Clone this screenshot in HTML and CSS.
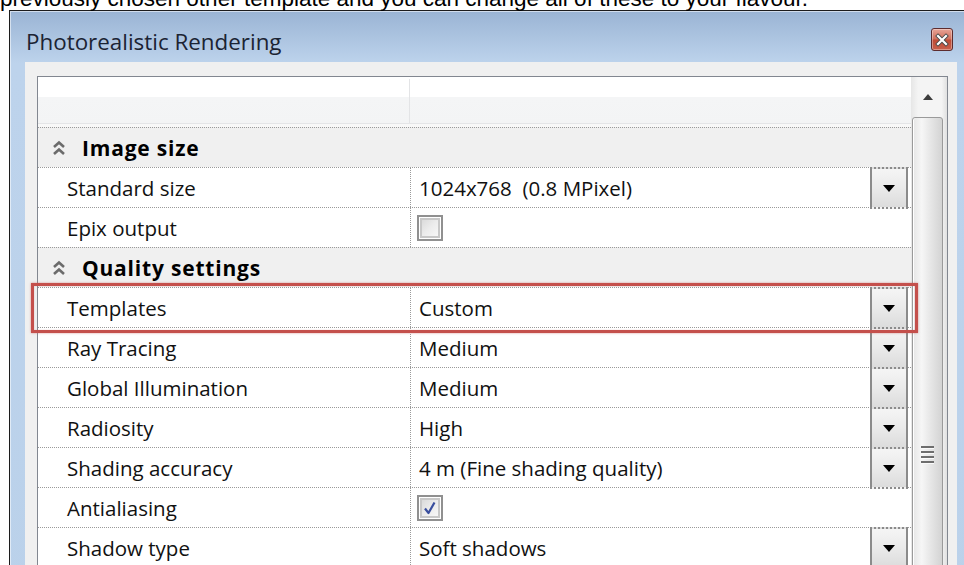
FILE: index.html
```html
<!DOCTYPE html>
<html lang="en">
<head>
<meta charset="utf-8">
<title>Photorealistic Rendering</title>
<link rel="stylesheet" href="styles.css">
</head>
<body>
<p class="caption">previously chosen other template and you can change all of these to your flavour.</p>

<div class="window">
  <div class="titlebar">
    <span class="title">Photorealistic Rendering</span>
    <span class="close">
      <svg viewBox="0 0 14 14" width="14" height="14">
        <path d="M3 3 L11 11 M11 3 L3 11" stroke="#4a4a4a" stroke-width="4" stroke-linecap="square"/>
        <path d="M3 3 L11 11 M11 3 L3 11" stroke="#fff" stroke-width="2.2" stroke-linecap="square"/>
      </svg>
    </span>
  </div>

  <div class="client">
    <div class="grid">
      <div class="rows">
        <div class="head"><div class="hname"></div><div class="hval"></div></div>

        <div class="cat">
          <svg class="chev" viewBox="0 0 14 16" width="14" height="16"><path d="M2 7 L7 2.5 L12 7 M2 14 L7 9.5 L12 14" fill="none" stroke="#6b6b6b" stroke-width="2.6"/></svg>
          <span>Image size</span>
        </div>
        <div class="row">
          <div class="name">Standard size</div>
          <div class="val"><span class="text">1024x768  (0.8 MPixel)</span><span class="dd"><i></i></span></div>
        </div>
        <div class="row">
          <div class="name">Epix output</div>
          <div class="val"><span class="check"></span></div>
        </div>

        <div class="cat">
          <svg class="chev" viewBox="0 0 14 16" width="14" height="16"><path d="M2 7 L7 2.5 L12 7 M2 14 L7 9.5 L12 14" fill="none" stroke="#6b6b6b" stroke-width="2.6"/></svg>
          <span>Quality settings</span>
        </div>
        <div class="row">
          <div class="name">Templates</div>
          <div class="val"><span class="text">Custom</span><span class="dd"><i></i></span></div>
        </div>
        <div class="row">
          <div class="name">Ray Tracing</div>
          <div class="val"><span class="text">Medium</span><span class="dd"><i></i></span></div>
        </div>
        <div class="row">
          <div class="name">Global Illumination</div>
          <div class="val"><span class="text">Medium</span><span class="dd"><i></i></span></div>
        </div>
        <div class="row">
          <div class="name">Radiosity</div>
          <div class="val"><span class="text">High</span><span class="dd"><i></i></span></div>
        </div>
        <div class="row">
          <div class="name">Shading accuracy</div>
          <div class="val"><span class="text">4 m (Fine shading quality)</span><span class="dd"><i></i></span></div>
        </div>
        <div class="row">
          <div class="name">Antialiasing</div>
          <div class="val">
            <span class="check">
              <svg viewBox="0 0 22 22" width="22" height="22"><path d="M6 11.5 L9.5 16 L15.5 5.5" fill="none" stroke="#3a4f9e" stroke-width="2.2" stroke-linejoin="round"/></svg>
            </span>
          </div>
        </div>
        <div class="row">
          <div class="name">Shadow type</div>
          <div class="val"><span class="text">Soft shadows</span><span class="dd"><i></i></span></div>
        </div>
      </div>

      <div class="vscroll">
        <div class="up"><i></i></div>
        <div class="thumb"><span class="grip"><b></b><b></b><b></b><b></b></span></div>
      </div>
    </div>
    <div class="highlight"></div>
  </div>
</div>
</body>
</html>
```

FILE: styles.css
```css
html, body {
  margin: 0;
  padding: 0;
  background: #fff;
  overflow: hidden;
  height: 565px;
}

.caption {
  margin: -11px 0 0 0;
  font: 22.5px/20px "Liberation Sans", Arial, sans-serif;
  color: #000;
  white-space: nowrap;
}

/* window frame */
.window {
  margin: 1px 0 0 9px;
  width: 955px;
  border: 1px solid #1c1c1c;
  background: linear-gradient(to bottom, #9ab4d4 0, #bdd3ec 52px, #bad1ea 100%);
  box-shadow: inset 1px 1px 0 rgba(255, 255, 255, 0.55);
  font-family: "Open Sans", "Noto Sans", sans-serif;
}

.titlebar {
  height: 51px;
  display: flex;
  align-items: center;
  padding: 0 12px 0 16px;
}

.title {
  font-size: 22.4px;
  color: #1b2333;
  margin-top: 10px;
}

.close {
  margin-left: auto;
  width: 22px;
  height: 23px;
  box-sizing: border-box;
  border: 1px solid #5d2c2e;
  border-radius: 3px;
  background: linear-gradient(to bottom, #e8a497 0, #d06f5c 48%, #bf4b36 52%, #c8604c 100%);
  box-shadow: inset 0 0 0 1px rgba(255, 255, 255, 0.35);
  display: flex;
  align-items: center;
  justify-content: center;
  margin-top: 6px;
}

/* client area */
.client {
  position: relative;
  margin-left: 15px;
  width: 932px;
  box-sizing: border-box;
  padding: 14px 9px 0 12px;
  background: #f0f0f0;
}

.grid {
  display: flex;
  border: 1px solid #828790;
  background: #fff;
  height: 600px;
}

.rows {
  width: 873px;
  flex: none;
  font-size: 20.5px;
  color: #111;
}

.head {
  display: flex;
  height: 50px;
  background: linear-gradient(to bottom, #fff 0, #fff 20px, #f4f5f6 20px, #f3f4f5 46px, #e4e5e7 46px, #e4e5e7 47px, #f8f8f8 47px);
}

.hname {
  width: 371px;
  border-right: 1px solid #e3e4e6;
  margin: 2px 0 4px;
}

.hval { flex: 1; }

.row, .cat {
  height: 40px;
  box-sizing: border-box;
  border-top: 1px dotted #9a9a9a;
  display: flex;
  align-items: center;
}

.cat {
  background: #f0f0f0;
  padding-left: 14px;
  font-weight: 700;
  font-size: 21px;
  letter-spacing: 0.8px;
  color: #000;
}

.chev {
  margin-right: 16px;
  margin-top: 1px;
}

.name {
  width: 343px;
  height: 100%;
  padding-left: 29px;
  border-right: 1px dotted #9a9a9a;
  display: flex;
  align-items: center;
}

.val {
  flex: 1;
  height: 100%;
  display: flex;
  align-items: center;
  padding: 0 3px 0 8px;
  white-space: pre;
}

.dd {
  margin-left: auto;
  align-self: flex-start;
  margin-top: -1px;
  width: 38px;
  height: 42px;
  box-sizing: border-box;
  border: 2px solid #8b8b8b;
  border-top-style: dotted;
  border-bottom-style: dotted;
  background: linear-gradient(to bottom, #f5f5f5 0, #eaeaea 50%, #dcdcdc 100%);
  display: flex;
  align-items: center;
  justify-content: center;
}

.dd i {
  width: 0;
  height: 0;
  border-left: 6px solid transparent;
  border-right: 6px solid transparent;
  border-top: 7px solid #000;
  margin-top: 1px;
}

.check {
  width: 26px;
  height: 26px;
  box-sizing: border-box;
  border: 2px solid #909090;
  background: linear-gradient(135deg, #d4d4d4 0, #ececec 50%, #fbfbfb 100%);
  box-shadow: inset 0 0 0 1px #fff, inset 0 0 0 3px #c8c8c8;
  display: flex;
  align-items: center;
  justify-content: center;
  margin-left: -2px;
}

/* vertical scrollbar */
.vscroll {
  flex: 1;
  background: linear-gradient(to right, #e6e6e6 0, #f4f4f4 20%, #f4f4f4 85%, #e0e0e0 100%);
  display: flex;
  flex-direction: column;
  align-items: flex-start;
}

.up {
  flex: none;
  height: 40px;
  display: flex;
  align-items: center;
  justify-content: center;
  width: 33px;
}

.up i {
  width: 0;
  height: 0;
  border-left: 5px solid transparent;
  border-right: 5px solid transparent;
  border-bottom: 6px solid #3c3c3c;
}

.thumb {
  width: 31px;
  height: 676px;
  flex: none;
  margin-left: 1px;
  box-sizing: border-box;
  border: 1px solid #9a9a9a;
  border-radius: 3px;
  background: linear-gradient(to right, #e6e6e6 0, #f6f6f6 30%, #e9e9e9 55%, #d3d3d3 100%);
  box-shadow: inset 1px 0 0 #fff;
  display: flex;
  align-items: center;
  justify-content: center;
}

.grip {
  display: flex;
  flex-direction: column;
  gap: 2px;
}

.grip b {
  width: 13px;
  height: 2px;
  background: #6e6e6e;
  border-bottom: 1px solid #fafafa;
}

/* red frame drawn over the Templates row */
.highlight {
  position: absolute;
  left: 6px;
  top: 221px;
  width: 887px;
  height: 50px;
  box-sizing: border-box;
  border: 3px solid #c4504c;
  box-shadow: 0 0 2px rgba(196, 80, 76, 0.6), inset 0 0 1px rgba(196, 80, 76, 0.6);
}
```
